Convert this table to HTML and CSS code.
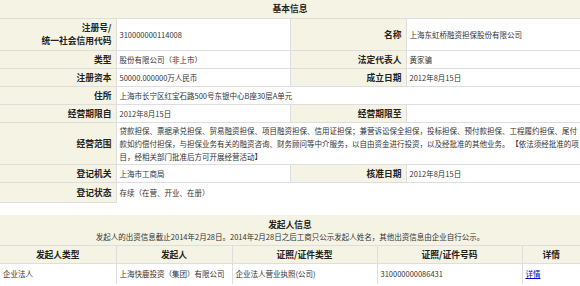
FILE: index.html
```html
<!DOCTYPE html>
<html lang="zh-CN">
<head>
<meta charset="utf-8">
<title>基本信息</title>
<link rel="stylesheet" href="styles.css">
</head>
<body>
<table class="info">
  <colgroup><col class="c20"><col class="c30"><col class="c20"><col class="c30"></colgroup>
  <tr><th class="title" colspan="4">基本信息</th></tr>
  <tr class="tall"><th class="lbl">注册号/<br>统一社会信用代码</th><td class="val num">310000000114008</td><th class="lbl">名称</th><td class="val">上海东虹桥融资担保股份有限公司</td></tr>
  <tr><th class="lbl">类型</th><td class="val">股份有限公司（非上市）</td><th class="lbl">法定代表人</th><td class="val">黄家骗</td></tr>
  <tr><th class="lbl">注册资本</th><td class="val">50000.000000万人民币</td><th class="lbl">成立日期</th><td class="val">2012年8月15日</td></tr>
  <tr><th class="lbl">住所</th><td class="val" colspan="3">上海市长宁区红宝石路500号东银中心B座30层A单元</td></tr>
  <tr><th class="lbl">经营期限自</th><td class="val">2012年8月15日</td><th class="lbl">经营期限至</th><td class="val"></td></tr>
  <tr><th class="lbl">经营范围</th><td class="val scope" colspan="3">贷款担保、票据承兑担保、贸易融资担保、项目融资担保、信用证担保；兼营诉讼保全担保，投标担保、预付款担保、工程履约担保、尾付款如约偿付担保，与担保业务有关的融资咨询、财务顾问等中介服务，以自由资金进行投资，以及经批准的其他业务。 【依法须经批准的项目，经相关部门批准后方可开展经营活动】</td></tr>
  <tr><th class="lbl">登记机关</th><td class="val">上海市工商局</td><th class="lbl">核准日期</th><td class="val">2012年8月15日</td></tr>
  <tr><th class="lbl">登记状态</th><td class="val" colspan="3">存续（在营、开业、在册）</td></tr>
</table>
<div class="spacer"></div>
<table class="info">
  <colgroup><col class="c20"><col class="c20"><col class="c25"><col class="c25"><col class="c10"></colgroup>
  <tr><th class="title sec" colspan="5"><div class="sec-title">发起人信息</div><div class="sec-note">发起人的出资信息截止2014年2月28日。2014年2月28日之后工商只公示发起人姓名，其他出资信息由企业自行公示。</div></th></tr>
  <tr><th class="head">发起人类型</th><th class="head">发起人</th><th class="head">证照/证件类型</th><th class="head">证照/证件号码</th><th class="head">详情</th></tr>
  <tr><td class="val">企业法人</td><td class="val">上海快鹿投资（集团）有限公司</td><td class="val">企业法人营业执照(公司)</td><td class="val">310000000086431</td><td class="val"><a class="link" href="#">详情</a></td></tr>
</table>
</body>
</html>
```
FILE: styles.css
```css
html, body {
  margin: 0;
  padding: 0;
  background: #fff;
}
body {
  font-family: "Noto Sans CJK SC", "Noto Sans", sans-serif;
  color: #333;
  width: 580px;
}
.info {
  width: 580px;
  border-collapse: collapse;
  table-layout: fixed;
}
.c20 { width: 20%; }
.c30 { width: 30%; }
.c25 { width: 25%; }
.c10 { width: 10%; }
.info th, .info td {
  border: 1px solid #dedede;
  height: 18px;
  padding: 0;
  box-sizing: border-box;
}
.info tr:first-child th { border-top: none; }
.info th:first-child, .info td:first-child { border-left: none; }
.info th:last-child, .info td:last-child { border-right: none; }
.title {
  background: #f5f3e4;
  font-size: 8.75px;
  font-weight: bold;
  color: #222;
  text-align: center;
  height: 18px;
  line-height: 12px;
}
.lbl {
  background: #f5f3e4;
  font-size: 8.75px;
  font-weight: bold;
  color: #222;
  text-align: right;
  padding: 0 4px 0 0 !important;
  line-height: 13px;
}
.val {
  font-size: 7.5px;
  color: #333;
  text-align: left;
  padding: 0 3px !important;
  line-height: 13px;
}
.tall th, .tall td { height: 32px; }
.info .scope { height: 41px; padding: 1px 0 1px 3px !important; }
.spacer { height: 12px; }
.info .sec {
  height: 31px;
  padding: 3px 0 2px !important;
}
.sec-title {
  font-size: 8.75px;
  font-weight: bold;
  line-height: 13px;
}
.sec-note {
  font-size: 7.5px;
  font-weight: normal;
  line-height: 11px;
  color: #333;
}
.head {
  background: #f5f3e4;
  font-size: 8.75px;
  font-weight: bold;
  color: #222;
  text-align: center;
}
.info tr:last-child td { border-bottom: none; height: 20px; }
.link {
  color: #00c;
  text-decoration: underline;
}
```
